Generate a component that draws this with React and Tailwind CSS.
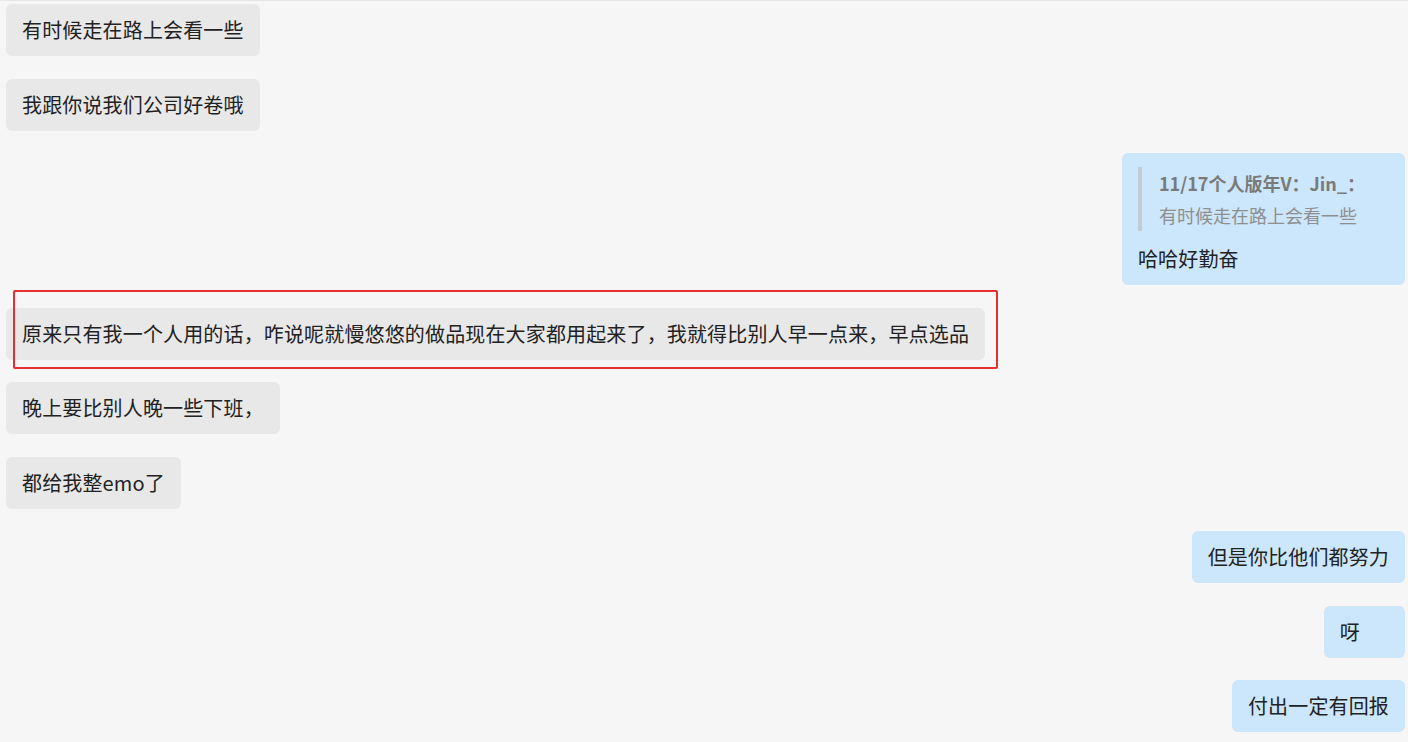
import React from "react";

const messages = [
  { id: 1, side: "left", text: "有时候走在路上会看一些" },
  { id: 2, side: "left", text: "我跟你说我们公司好卷哦" },
  {
    id: 3,
    side: "right",
    text: "哈哈好勤奋",
    quote: { name: "11/17个人版年V：Jin_：", text: "有时候走在路上会看一些" },
  },
  {
    id: 4,
    side: "left",
    text: "原来只有我一个人用的话，咋说呢就慢悠悠的做品现在大家都用起来了，我就得比别人早一点来，早点选品",
    highlighted: true,
  },
  { id: 5, side: "left", text: "晚上要比别人晚一些下班，" },
  { id: 6, side: "left", text: "都给我整emo了" },
  { id: 7, side: "right", text: "但是你比他们都努力" },
  { id: 8, side: "right", text: "呀", extra: "pr-[45px]" },
  { id: 9, side: "right", text: "付出一定有回报" },
];

function Bubble({ msg }) {
  const isRight = msg.side === "right";
  const base = isRight ? "bg-[#cce6fc]" : "bg-[#e8e8e8]";
  const pad = msg.extra ? `pl-[16px] ${msg.extra}` : "px-[16px]";

  return (
    <div className={`flex ${isRight ? "justify-end" : "justify-start"}`}>
      <div className="relative">
        <div
          className={`${base} ${pad} py-[12px] rounded-[6px] text-[20px] leading-[28px] tracking-[0.15px] text-[#222] whitespace-nowrap`}
        >
          {msg.quote && (
            <div className="border-l-[4px] border-[#c3ccd6] pl-[17px] pr-[24px] mt-[2px] mb-[14px] tracking-normal">
              <div className="text-[18px] leading-[32px] font-bold text-[#7a7a7a]">
                {msg.quote.name}
              </div>
              <div className="text-[18px] leading-[32px] text-[#8f8f8f]">
                {msg.quote.text}
              </div>
            </div>
          )}
          {msg.text}
        </div>
        {msg.highlighted && (
          <div className="absolute top-[-18px] left-[7px] w-[985px] h-[79px] border-2 border-[#e53030] rounded-[2px] pointer-events-none" />
        )}
      </div>
    </div>
  );
}

export default function App() {
  return (
    <div
      className="w-[1408px] h-[742px] overflow-hidden bg-[#f6f6f6] border-t border-[#e6e6e6]"
      style={{ fontFamily: '"Noto Sans CJK SC", "Noto Sans", sans-serif' }}
    >
      <div className="flex flex-col gap-[22.5px] pt-[3px] pl-[6px] pr-[3px]">
        {messages.map((m) => (
          <Bubble key={m.id} msg={m} />
        ))}
      </div>
    </div>
  );
}
